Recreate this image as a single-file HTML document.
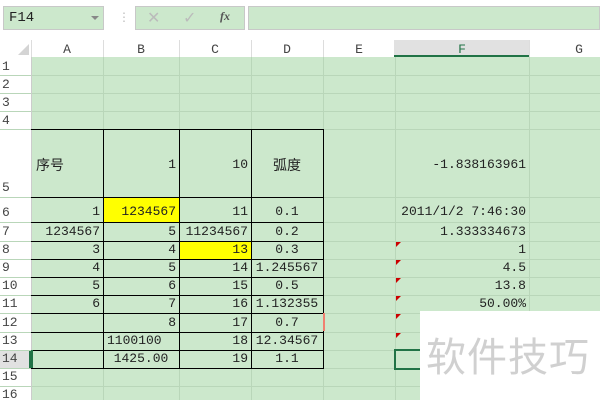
<!DOCTYPE html>
<html><head><meta charset="utf-8"><style>
*{margin:0;padding:0;box-sizing:border-box}
body{width:600px;height:400px;overflow:hidden;background:#fff;position:relative;font-family:"Liberation Mono","Noto Sans CJK SC",monospace;font-size:13px;color:#222}
.a{position:absolute}
.g{background:#cce8cc}
.c{position:absolute;line-height:18px;white-space:nowrap;padding:0 3px}
.r{text-align:right}.m{text-align:center}
.hd{position:absolute;color:#444;font-size:13px;text-align:center}
.vl{position:absolute;width:1px;background:#b9d6b9}
.hl{position:absolute;height:1px;background:#b9d6b9}
.bv{position:absolute;width:1px;background:#000}
.bh{position:absolute;height:1px;background:#000}
.tri{position:absolute;width:0;height:0;border-top:5px solid #c00;border-right:5px solid transparent}
</style></head><body>
<!-- top bar -->
<div class="a g" style="left:3px;top:6px;width:101px;height:24px;border:1px solid #c8c8c8"></div>
<div class="a" style="left:9px;top:10px;font-size:14px">F14</div>
<div class="a" style="left:91px;top:16px;width:0;height:0;border-left:4px solid transparent;border-right:4px solid transparent;border-top:4px solid #888"></div>
<div class="a" style="left:118px;top:10px;color:#bbb;font-size:12px">⋮</div>
<div class="a g" style="left:135px;top:6px;width:110px;height:24px;border:1px solid #c8c8c8"></div>
<div class="a" style="left:147px;top:8px;color:#bbb;font-size:16px;font-family:'DejaVu Sans'">✕</div>
<div class="a" style="left:183px;top:8px;color:#bbb;font-size:16px;font-family:'DejaVu Sans'">✓</div>
<div class="a" style="left:220px;top:9px;color:#555;font-size:12px;font-style:italic;font-family:'Liberation Serif';font-weight:bold">fx</div>
<div class="a g" style="left:248px;top:6px;width:352px;height:24px;border:1px solid #c8c8c8"></div>
<!-- grid bg -->
<div class="a g" style="left:31px;top:57px;width:569px;height:343px"></div>
<!-- column header -->
<div class="a" style="left:394px;top:40px;width:135px;height:17px;background:#e1e1e1;border-bottom:2px solid #217346"></div>
<div class="a" style="left:0;top:57px;width:31px;height:343px;background:#fff"></div>
<div class="a" style="left:0;top:350px;width:31px;height:18px;background:#e1e1e1;border-right:2px solid #217346"></div>
<div class="a" style="left:18px;top:44px;width:0;height:0;border-left:11px solid transparent;border-bottom:11px solid #d4d4d4"></div>
<div class="hd" style="left:31px;top:42px;width:72px">A</div>
<div class="hd" style="left:103px;top:42px;width:76px">B</div>
<div class="hd" style="left:179px;top:42px;width:72px">C</div>
<div class="hd" style="left:251px;top:42px;width:72px">D</div>
<div class="hd" style="left:323px;top:42px;width:72px">E</div>
<div class="hd" style="left:395px;top:42px;width:134px;color:#217346">F</div>
<div class="hd" style="left:529px;top:42px;width:100px">G</div>
<div class="a" style="left:103px;top:40px;width:1px;height:17px;background:#ddd"></div>
<div class="a" style="left:179px;top:40px;width:1px;height:17px;background:#ddd"></div>
<div class="a" style="left:251px;top:40px;width:1px;height:17px;background:#ddd"></div>
<div class="a" style="left:323px;top:40px;width:1px;height:17px;background:#ddd"></div>
<div class="a" style="left:529px;top:40px;width:1px;height:17px;background:#ddd"></div>
<div class="a" style="left:31px;top:40px;width:1px;height:17px;background:#ddd"></div>
<!-- row headers -->
<div class="hd" style="left:2px;top:59px;width:20px;text-align:left">1</div>
<div class="hd" style="left:2px;top:77px;width:20px;text-align:left">2</div>
<div class="hd" style="left:2px;top:95px;width:20px;text-align:left">3</div>
<div class="hd" style="left:2px;top:113px;width:20px;text-align:left">4</div>
<div class="hd" style="left:2px;top:180px;width:20px;text-align:left">5</div>
<div class="hd" style="left:2px;top:205px;width:20px;text-align:left">6</div>
<div class="hd" style="left:2px;top:224px;width:20px;text-align:left">7</div>
<div class="hd" style="left:2px;top:242px;width:20px;text-align:left">8</div>
<div class="hd" style="left:2px;top:260px;width:20px;text-align:left">9</div>
<div class="hd" style="left:2px;top:278px;width:20px;text-align:left">10</div>
<div class="hd" style="left:2px;top:296px;width:20px;text-align:left">11</div>
<div class="hd" style="left:2px;top:315px;width:20px;text-align:left">12</div>
<div class="hd" style="left:2px;top:333px;width:20px;text-align:left">13</div>
<div class="hd" style="left:2px;top:351px;width:20px;text-align:left">14</div>
<div class="hd" style="left:2px;top:369px;width:20px;text-align:left">15</div>
<div class="hd" style="left:2px;top:387px;width:20px;text-align:left">16</div>
<!-- light grid -->
<div class="hl" style="left:0;top:75px;width:600px"></div>
<div class="hl" style="left:0;top:93px;width:600px"></div>
<div class="hl" style="left:0;top:111px;width:600px"></div>
<div class="hl" style="left:0;top:129px;width:600px"></div>
<div class="hl" style="left:0;top:197px;width:600px"></div>
<div class="hl" style="left:0;top:222px;width:600px"></div>
<div class="hl" style="left:0;top:241px;width:600px"></div>
<div class="hl" style="left:0;top:259px;width:600px"></div>
<div class="hl" style="left:0;top:277px;width:600px"></div>
<div class="hl" style="left:0;top:295px;width:600px"></div>
<div class="hl" style="left:0;top:313px;width:600px"></div>
<div class="hl" style="left:0;top:332px;width:600px"></div>
<div class="hl" style="left:0;top:350px;width:600px"></div>
<div class="hl" style="left:0;top:368px;width:600px"></div>
<div class="hl" style="left:0;top:386px;width:600px"></div>
<div class="vl" style="left:31px;top:57px;height:343px;background:#ccc"></div>
<div class="vl" style="left:103px;top:57px;height:343px"></div>
<div class="vl" style="left:179px;top:57px;height:343px"></div>
<div class="vl" style="left:251px;top:57px;height:343px"></div>
<div class="vl" style="left:323px;top:57px;height:343px"></div>
<div class="vl" style="left:395px;top:57px;height:343px"></div>
<div class="vl" style="left:529px;top:57px;height:343px"></div>
<!-- yellow -->
<div class="a" style="left:104px;top:198px;width:75px;height:24px;background:#ffff00"></div>
<div class="a" style="left:180px;top:242px;width:71px;height:17px;background:#ffff00"></div>
<!-- black borders -->
<div class="bh" style="left:31px;top:129px;width:293px"></div>
<div class="bh" style="left:31px;top:197px;width:293px"></div>
<div class="bh" style="left:31px;top:222px;width:293px"></div>
<div class="bh" style="left:31px;top:241px;width:293px"></div>
<div class="bh" style="left:31px;top:259px;width:293px"></div>
<div class="bh" style="left:31px;top:277px;width:293px"></div>
<div class="bh" style="left:31px;top:295px;width:293px"></div>
<div class="bh" style="left:31px;top:313px;width:293px"></div>
<div class="bh" style="left:31px;top:332px;width:293px"></div>
<div class="bh" style="left:31px;top:350px;width:293px"></div>
<div class="bh" style="left:31px;top:368px;width:293px"></div>
<div class="bv" style="left:103px;top:129px;height:240px"></div>
<div class="bv" style="left:179px;top:129px;height:240px"></div>
<div class="bv" style="left:251px;top:129px;height:240px"></div>
<div class="bv" style="left:323px;top:129px;height:240px"></div>
<div class="a" style="left:31px;top:350px;width:2px;height:18px;background:#217346"></div>
<!-- cells -->
<div class="c" style="left:33px;top:156px;font-family:'Noto Sans CJK SC',sans-serif;font-size:14px">序号</div>
<div class="c r" style="left:103px;top:156px;width:76px">1</div>
<div class="c r" style="left:179px;top:156px;width:72px">10</div>
<div class="c m" style="left:251px;top:156px;width:72px;font-family:'Noto Sans CJK SC',sans-serif;font-size:14px">弧度</div>
<div class="c r" style="left:395px;top:156px;width:134px">-1.838163961</div>

<div class="c r" style="left:31px;top:203px;width:72px">1</div>
<div class="c r" style="left:103px;top:203px;width:76px">1234567</div>
<div class="c r" style="left:179px;top:203px;width:72px">11</div>
<div class="c m" style="left:251px;top:203px;width:72px">0.1</div>
<div class="c r" style="left:395px;top:203px;width:134px">2011/1/2 7:46:30</div>

<div class="c r" style="left:31px;top:223px;width:72px">1234567</div>
<div class="c r" style="left:103px;top:223px;width:76px">5</div>
<div class="c r" style="left:179px;top:223px;width:72px">11234567</div>
<div class="c m" style="left:251px;top:223px;width:72px">0.2</div>
<div class="c r" style="left:395px;top:223px;width:134px">1.333334673</div>

<div class="c r" style="left:31px;top:241px;width:72px">3</div>
<div class="c r" style="left:103px;top:241px;width:76px">4</div>
<div class="c r" style="left:179px;top:241px;width:72px">13</div>
<div class="c m" style="left:251px;top:241px;width:72px">0.3</div>
<div class="c r" style="left:395px;top:241px;width:134px">1</div>

<div class="c r" style="left:31px;top:259px;width:72px">4</div>
<div class="c r" style="left:103px;top:259px;width:76px">5</div>
<div class="c r" style="left:179px;top:259px;width:72px">14</div>
<div class="c m" style="left:251px;top:259px;width:72px;padding:0">1.245567</div>
<div class="c r" style="left:395px;top:259px;width:134px">4.5</div>

<div class="c r" style="left:31px;top:277px;width:72px">5</div>
<div class="c r" style="left:103px;top:277px;width:76px">6</div>
<div class="c r" style="left:179px;top:277px;width:72px">15</div>
<div class="c m" style="left:251px;top:277px;width:72px">0.5</div>
<div class="c r" style="left:395px;top:277px;width:134px">13.8</div>

<div class="c r" style="left:31px;top:295px;width:72px">6</div>
<div class="c r" style="left:103px;top:295px;width:76px">7</div>
<div class="c r" style="left:179px;top:295px;width:72px">16</div>
<div class="c m" style="left:251px;top:295px;width:72px;padding:0">1.132355</div>
<div class="c r" style="left:395px;top:295px;width:134px">50.00%</div>

<div class="c r" style="left:103px;top:314px;width:76px">8</div>
<div class="c r" style="left:179px;top:314px;width:72px">17</div>
<div class="c m" style="left:251px;top:314px;width:72px">0.7</div>

<div class="c" style="left:104px;top:332px">1100100</div>
<div class="c r" style="left:179px;top:332px;width:72px">18</div>
<div class="c m" style="left:251px;top:332px;width:72px;padding:0">12.34567</div>

<div class="c m" style="left:103px;top:350px;width:76px">1425.00</div>
<div class="c r" style="left:179px;top:350px;width:72px">19</div>
<div class="c m" style="left:251px;top:350px;width:72px">1.1</div>

<div class="a" style="left:323px;top:313px;width:2px;height:18px;background:#f08070"></div>
<!-- triangles -->
<div class="tri" style="left:396px;top:242px"></div>
<div class="tri" style="left:396px;top:260px"></div>
<div class="tri" style="left:396px;top:278px"></div>
<div class="tri" style="left:396px;top:296px"></div>
<div class="tri" style="left:396px;top:314px"></div>
<div class="tri" style="left:396px;top:333px"></div>
<!-- selection -->
<div class="a" style="left:394px;top:349px;width:40px;height:21px;border:2px solid #217346"></div>
<!-- watermark -->
<div class="a" style="left:420px;top:311px;width:180px;height:89px;background:#fff"></div>
<div class="a" style="left:426px;top:326px;font-family:'Noto Sans CJK SC',sans-serif;font-size:40px;color:#d0d0d0;line-height:56px;letter-spacing:1px">软件技巧</div>
</body></html>
